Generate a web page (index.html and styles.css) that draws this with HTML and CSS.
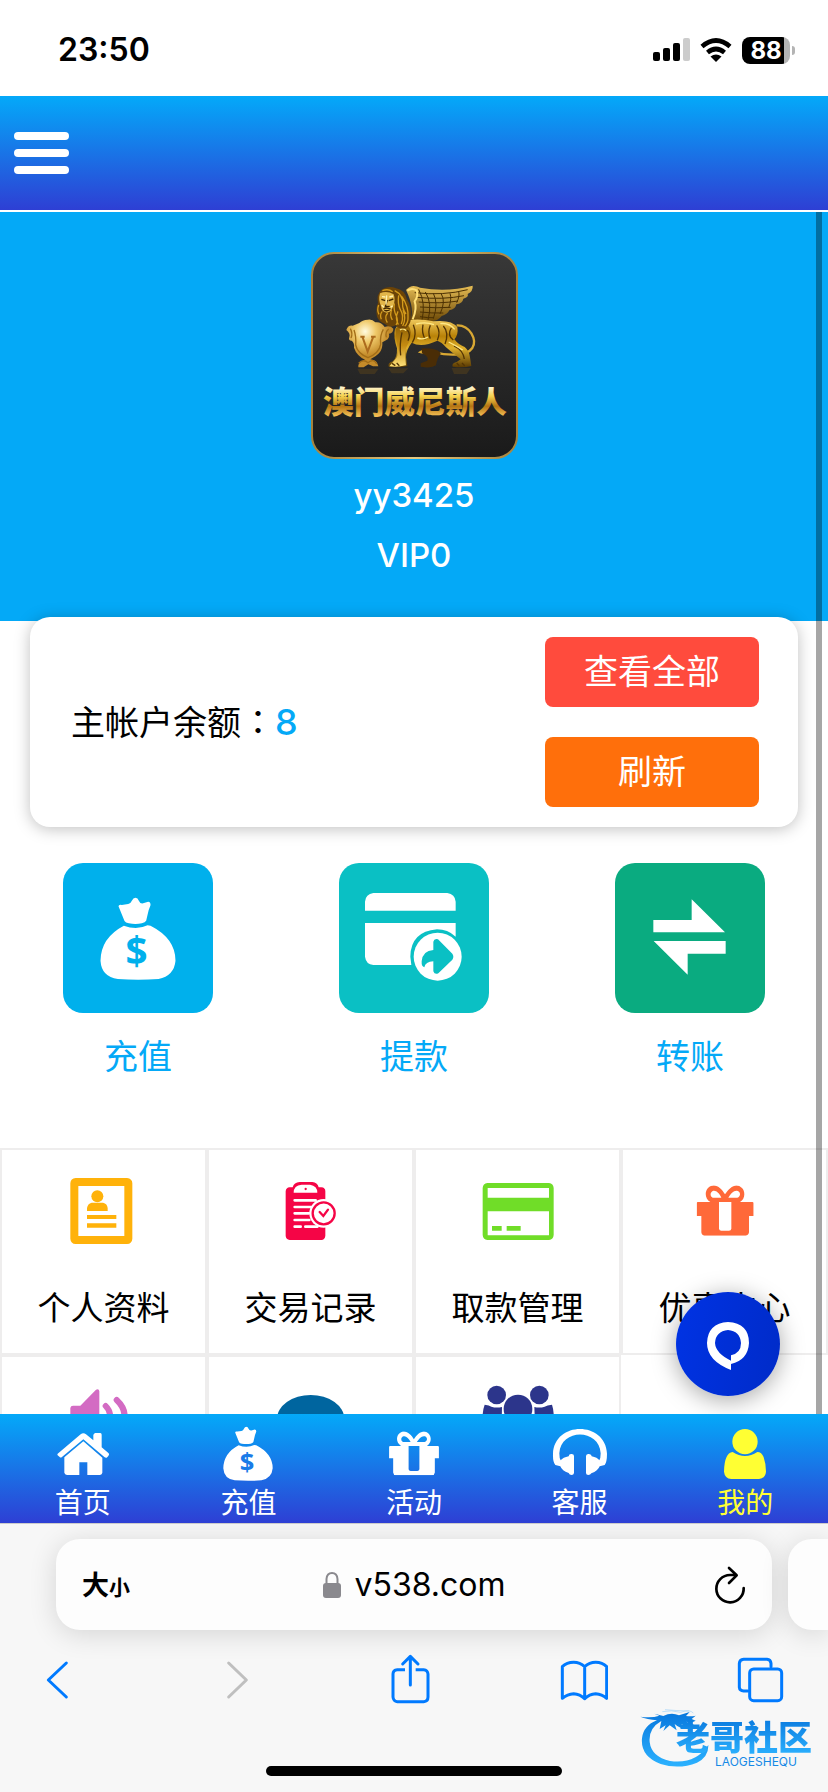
FILE: index.html
```html
<!DOCTYPE html>
<html lang="zh-CN">
<head>
<meta charset="utf-8">
<meta name="viewport" content="width=device-width, initial-scale=1">
<title>我的</title>
<link rel="stylesheet" href="styles.css">
</head>
<body>
<svg class="defs" aria-hidden="true">
  <symbol id="bag" viewBox="179 136 227 249">
    <path d="M234 164Q235 157 244 160L263 157Q271 155 274 147Q278 138 285 138Q292 138 295 147Q299 157 308 155L323 150Q331 151 330 161Q323 177 321 190L317 207Q314 212 304 215Q285 219 265 215Q255 213 252 208Z"/>
    <path d="M250 222Q288 237 321 221L330 222Q405 260 405 327Q401 372 354 382Q293 386 232 382Q183 375 180 327Q181 258 250 222Z"/>
    <text class="bag-sign" x="288" y="339" text-anchor="middle">$</text>
  </symbol>
  <symbol id="gift" viewBox="858 136 171 151">
    <path fill-rule="evenodd" d="M862 186H899C882 176 882 154 892 144C912 126 932 144 943 163C956 143 976 126 994 144C1005 156 1003 177 988 186H1025Q1029 186 1029 190V228H1015V277Q1014 286 1005 287H881Q873 286 872 277V228H858V190Q858 186 862 186ZM925 186V266Q926 272 932 272H955Q961 272 962 266V186ZM906 173H932C925 158 914 149 905 154C897 160 899 170 906 173ZM953 173H980C990 169 991 157 981 153C970 150 961 160 953 173Z"/>
  </symbol>
</svg>

<header class="status">
  <time class="clock">23:50</time>
  <div class="status-icons">
    <svg width="37" height="24" viewBox="0 0 37 24" aria-label="信号"><rect y="14" width="7" height="9" rx="2"/><rect x="10" y="10" width="7" height="13" rx="2"/><rect x="20" y="5" width="7" height="18" rx="2"/><rect x="30" width="7" height="23" rx="2" fill="#ccc"/></svg>
    <svg width="32" height="24" viewBox="0 0 32 24" aria-label="无线网络"><path d="M16 24L10.500 18.500Q16 14.500 21.500 18.500Z"/><path d="M7.500 14.500Q16 7.500 24.500 14.500M2 8.500Q16-3.500 30 8.500" fill="none" stroke="#000" stroke-width="4.600"/></svg>
    <span class="battery"><span class="battery-body">88</span><span class="battery-nub"></span></span>
  </div>
</header>

<nav class="topbar">
  <button class="menu" aria-label="菜单"><span></span><span></span><span></span></button>
</nav>

<main class="page">
  <section class="hero">
    <svg class="avatar" viewBox="33 36 621 621" role="img" aria-label="澳门威尼斯人">
      <defs>
        <linearGradient id="plate" x2="0" y2="1"><stop stop-color="#383838"/><stop offset="1" stop-color="#1a1a1a"/></linearGradient>
        <linearGradient id="rim"><stop stop-color="#a5823c"/><stop offset=".5" stop-color="#e3c983"/><stop offset="1" stop-color="#a5823c"/></linearGradient>
        <linearGradient id="gold" x2="0" y2="1"><stop stop-color="#f0c95c"/><stop offset=".35" stop-color="#b98208"/><stop offset=".6" stop-color="#dfb02c"/><stop offset="1" stop-color="#5a3a02"/></linearGradient>
        <linearGradient id="leg" x2="0" y2="1"><stop stop-color="#8a5d05"/><stop offset=".5" stop-color="#c48b12"/><stop offset="1" stop-color="#ffe27a"/></linearGradient>
        <linearGradient id="wing" x2="0" y2="1"><stop stop-color="#e6bd55"/><stop offset="1" stop-color="#6b4705"/></linearGradient>
        <radialGradient id="shield" cx=".4" cy=".25"><stop stop-color="#fffbe0"/><stop offset=".45" stop-color="#f0ca6a"/><stop offset="1" stop-color="#c48b2a"/></radialGradient>
        <linearGradient id="letter" gradientUnits="userSpaceOnUse" x1="0" y1="436" x2="0" y2="528"><stop stop-color="#fffbe8"/><stop offset=".35" stop-color="#f6d24e"/><stop offset=".68" stop-color="#b57412"/><stop offset="1" stop-color="#f3bf55"/></linearGradient>
      </defs>
      <rect x="36" y="39" width="615" height="615" rx="66" fill="url(#plate)" stroke="url(#rim)" stroke-width="6"/>
      <path d="M172 386H236L224 402H180ZM265 385H325L310 400H275ZM455 384H512L500 402H462Z" fill="#3f3420"/>
      <path d="M470 256C510 254 532 300 517 324C500 349 445 347 402 337Q377 326 362 336Q378 340 392 338" fill="none" stroke="#d9a833" stroke-width="7"/>
      <path d="M365 325Q420 325 422 342Q412 352 408 376Q394 386 362 380L362 370L382 362Q388 350 366 340Z" fill="#4a2d06"/>
      <path d="M318 150C332 134 345 136 360 143Q440 158 518 137Q520 153 503 162Q507 172 490 176Q488 190 469 193Q466 208 448 211Q442 224 425 228Q415 242 394 244L330 246Q346 208 318 150Z" fill="url(#wing)"/>
      <path d="M344 158Q430 168 503 149M350 172Q430 180 492 167M356 186Q420 192 474 183M360 201Q410 205 452 202M360 216Q396 220 430 219M360 230Q382 234 402 233M356 148Q378 190 366 240M376 156Q398 190 384 240M400 160Q416 190 400 236M424 162Q438 184 420 222M450 160Q456 176 446 204M476 155Q480 168 470 188" fill="none" stroke="#4c3103" stroke-width="3"/>
      <path d="M322 152Q335 142 350 151Q356 168 344 184Q352 205 338 238" fill="none" stroke="#ffe07a" stroke-width="6"/>
      <path d="M300 245Q350 232 400 244Q455 238 472 262Q476 284 463 298Q475 314 494 321Q508 333 510 352L514 378Q492 384 458 380Q454 370 470 366L482 358Q456 338 438 322Q425 306 412 302Q365 324 335 308Q318 330 318 352L322 378Q300 384 266 380Q262 370 278 364Q292 354 291 325Q279 290 285 268Z" fill="url(#gold)"/>
      <path d="M286 268Q298 250 322 253Q342 276 326 308Q312 330 316 354L318 376Q294 382 268 379L282 362Q297 352 292 322Z" fill="url(#leg)"/>
      <path d="M340 254Q352 284 337 308M369 254Q364 280 376 298M391 256Q382 278 391 296M410 256Q423 276 412 301M430 258Q448 278 435 312M454 264Q440 285 460 300M462 318Q489 330 493 357M306 277Q298 312 302 346M322 270Q333 282 324 302M276 370L286 377M290 369L298 377M470 369L478 377M486 369L494 377" fill="none" stroke="#543504" stroke-width="4"/>
      <path d="M348 252Q378 244 402 254M421 251Q448 248 464 268M300 270Q310 262 318 272M352 294Q370 300 384 291M446 306Q470 318 488 330" fill="none" stroke="#ffe988" stroke-width="4"/>
      <path d="M244 149Q266 136 288 145Q314 150 320 176Q335 198 332 225Q336 249 319 264Q298 270 287 256Q270 267 254 251Q238 246 231 230Q226 207 234 188Q229 164 244 149Z" fill="#6b4307"/>
      <path d="M284 152Q310 165 308 192Q306 205 318 222M296 166Q292 190 301 209Q313 228 304 252M306 170Q326 200 324 231Q325 248 314 259M283 190Q280 210 289 228Q296 243 288 255M275 209Q268 224 277 240M263 219Q252 232 262 248M247 214Q238 224 244 238M236 195Q230 210 237 223M294 214Q284 234 295 254M309 210Q320 235 308 258M247 152Q265 145 278 155" fill="none" stroke="#d39a1c" stroke-width="4"/>
      <path d="M240 160Q260 150 281 163Q287 180 280 197Q276 215 260 218Q245 217 243 198Q234 180 240 160Z" fill="#e2b649"/>
      <path d="M244 178L256 182M266 182L280 177M262 180L256 200L269 199M250 207Q259 202 272 207M253 211Q260 214 269 210" fill="none" stroke="#3e2602" stroke-width="4"/>
      <path d="M260 166L258 194M246 170L256 171M268 171L279 168M252 202L245 196M272 202L278 197" fill="none" stroke="#fff2b0" stroke-width="4"/>
      <path d="M139 270Q144 255 158 257L178 249Q187 240 203 239Q216 236 226 247Q244 245 254 261Q270 255 280 266Q280 279 267 281Q270 294 258 301L247 307Q249 327 237 340Q228 350 211 358Q232 360 235 379H219L205 373L191 382H175Q173 365 195 359Q170 347 162 323Q164 309 155 302Q144 302 148 291Q152 281 139 270Z" fill="url(#shield)"/>
      <path d="M162 270Q169 289 167 315Q172 340 204 353Q237 340 242 313Q239 287 250 268M176 370Q190 356 204 368Q222 354 230 372M151 266Q159 281 153 294M266 267Q255 275 259 292" fill="none" stroke="#a26d17" stroke-width="4"/>
      <path d="M187 290L203 335L220 290M181 290H194M213 290H227" fill="none" stroke="#ac6b1d" stroke-width="6"/>
      <text class="brand" x="345" y="519" text-anchor="middle">澳门威尼斯人</text>
    </svg>
    <p class="user-line">yy3425</p>
    <p class="user-line">VIP0</p>
  </section>

  <section class="balance">
    <p class="balance-text">主帐户余额<span lang="zh-TW" class="colon">：</span><strong>8</strong></p>
    <div class="balance-actions">
      <button class="btn btn-red">查看全部</button>
      <button class="btn btn-orange">刷新</button>
    </div>
  </section>

  <section class="quick">
    <a class="quick-item" href="#"><span class="tile tile-blue"><svg class="tile-bag"><use href="#bag"/></svg></span>充值</a>
    <a class="quick-item" href="#"><span class="tile tile-teal">
      <svg class="tile-art" viewBox="897 39 450 450"><path d="M975 182V155Q977 132 1000 129H1222Q1245 132 1247 155V182ZM975 219H1247V260Q1223 238 1191 238Q1112 245 1111 320L1114 345H1000Q978 343 975 320Z"/><circle cx="1193" cy="320" r="72"/><path fill="#0ac0c4" d="M1180 275Q1182 265 1194 268L1237 311Q1243 320 1237 329L1195 370Q1184 375 1180 364V334Q1156 335 1153 352Q1144 350 1145 334Q1148 302 1180 300Z"/></svg></span>提款</a>
    <a class="quick-item" href="#"><span class="tile tile-green">
      <svg class="tile-art" viewBox="465 39 450 450"><path d="M580 210H695V148L795 247H580ZM581 273H797V311H683V374Z"/></svg></span>转账</a>
  </section>

  <section class="grid">
    <a class="cell" href="#">
      <svg viewBox="203 105 216 216" fill="#ffb20a"><path fill-rule="evenodd" d="M226 114H380Q396 116 396 130V296Q395 311 380 312H226Q211 311 210 296V130Q211 115 226 114ZM234 138V288H372V138Z"/><circle cx="291" cy="169" r="18"/><path d="M260 213V204Q262 191 274 188H308Q321 191 322 204V213ZM260 225H348V237H260ZM260 250H348V263H260Z"/></svg>个人资料</a>
    <a class="cell" href="#">
      <svg viewBox="823 105 216 216" fill="#f50546"><path d="M876 142Q880 127 897 126H935Q950 127 954 142H962Q974 143 974 154V287Q973 299 962 300H867Q856 299 855 288V154Q856 143 867 142Z"/><path fill="#fff" d="M879 158Q879 136 903 134H928Q950 137 950 158Z"/><circle cx="915" cy="147" r="3.500"/><path d="M882 181H945M882 201H932M882 220H925M882 240H926M882 260H900M914 260H950" stroke="#fff" stroke-width="8" stroke-linecap="round"/><circle cx="969" cy="220" r="43" fill="#fff"/><circle cx="969" cy="220" r="33" fill="#fff" stroke="#f50546" stroke-width="7"/><path d="M957 216L968 228L982 209" fill="none" stroke="#f50546" stroke-width="7" stroke-linecap="round"/></svg>交易记录</a>
    <a class="cell" href="#">
      <svg viewBox="214 105 216 216" fill="#70dd28"><path fill-rule="evenodd" d="M230 129H415Q428 131 429 144V285Q428 298 415 300H230Q217 298 216 285V144Q217 131 230 129ZM231 144V173H415V144ZM231 214V286H415V214Z"/><path d="M244 258H273V272H244ZM288 258H330V272H288Z"/></svg>取款管理</a>
    <a class="cell" href="#">
      <svg viewBox="835 105 216 216" fill="#ff6939"><use href="#gift" x="858" y="136" width="171" height="151"/></svg>优惠中心</a>
    <a class="cell" href="#" aria-label="公告">
      <svg viewBox="203 726 216 216" fill="#d36bc3"><path d="M210 804Q211 797 218 797H240L287 749Q296 745 297 754V900L287 895L240 850H218Q211 850 210 843Z"/><path d="M316 798Q342 824 316 862M349 780Q396 824 349 880" fill="none" stroke="#d36bc3" stroke-width="18" stroke-linecap="round"/></svg></a>
    <a class="cell" href="#" aria-label="消息">
      <svg viewBox="823 726 216 216" fill="#00659f"><ellipse cx="930" cy="837" rx="101" ry="72"/></svg></a>
    <a class="cell" href="#" aria-label="团队">
      <svg viewBox="214 726 216 216" fill="#2c358b"><circle cx="258" cy="765" r="28"/><circle cx="386" cy="765" r="28"/><path d="M222 794Q236 796 242 800Q257 805 274 801L273 850H216Q214 814 222 794ZM371 801Q387 805 402 800Q409 796 424 794Q431 814 429 850H373Z"/><circle cx="322" cy="807" r="43"/></svg></a>
  </section>
  <span class="scrollbar"></span>
  <button class="fab" aria-label="在线客服"><svg viewBox="798 456 312 312"><path fill="#fff" fill-rule="evenodd" d="M954 546Q1017 550 1017 609Q1014 660 963 672V690Q891 662 891 609Q893 550 954 546ZM954 570Q917 574 915 609Q917 640 963 662V646Q993 639 993 609Q990 573 954 570Z"/></svg></button>
</main>

<nav class="tabs">
  <a class="tab" href="#"><svg viewBox="161 75 168 168"><path d="M169 161L238 103Q246 96 254 103L276 121V105Q277 100 282 99H297Q301 100 301 104V142L322 160Q325 164 321 168L316 173Q312 174 309 171L246 118L181 172Q178 174 175 171L169 166Q167 164 169 161Z"/><path d="M246 124L303 173V218Q302 224 296 225H258V187H234V225H197Q190 224 189 218V172Z"/></svg>首页</a>
  <a class="tab" href="#"><svg viewBox="660 75 168 168"><use href="#bag" x="669" y="79" width="150" height="164"/></svg>充值</a>
  <a class="tab" href="#"><svg viewBox="1158 75 168 168"><use href="#gift" x="1167" y="94" width="150" height="132"/></svg>活动</a>
  <a class="tab" href="#"><svg viewBox="423 75 168 168"><path d="M433 195Q425 186 426 161C430 62 584 62 588 161Q588 186 581 195L566 199Q561 213 541 220Q538 225 532 225Q525 225 525 219V168Q526 161 534 162Q542 163 542 169Q559 172 565 181Q569 175 569 160C565 85 449 85 445 160Q445 175 449 181Q456 172 473 169Q474 161 482 162Q489 162 489 168V219Q488 225 482 225Q475 225 473 219Q453 213 448 199Z"/></svg>客服</a>
  <a class="tab tab-active" href="#"><svg viewBox="920 75 168 168"><circle cx="1004" cy="125" r="38"/><path d="M967 156Q1004 180 1041 156Q1054 156 1060 172Q1067 192 1067 215Q1065 235 1046 237H963Q943 235 941 215Q942 159 967 156Z"/></svg>我的</a>
</nav>

<footer class="browser">
  <div class="address-row">
    <div class="address">
      <button class="text-size" aria-label="文字大小">大<small>小</small></button>
      <button class="url"><svg width="18" height="26" viewBox="0 0 18 26"><rect y="11" width="18" height="15" rx="3" fill="#8a898e"/><path d="M3.500 12V7Q4 1 9 1Q14 1 14.500 7V12" fill="none" stroke="#8a898e" stroke-width="2"/></svg>v538.com</button>
      <button class="reload" aria-label="重新加载"><svg width="32" height="38" viewBox="905 132 96 114" fill="none" stroke="#000" stroke-width="8" stroke-linecap="round" stroke-linejoin="round"><path d="M994 198A41 41 0 1 1 953 159H972M950 138L973 160L950 183"/></svg></button>
    </div>
    <div class="next-page"></div>
  </div>
  <div class="toolbar">
    <button aria-label="后退"><svg viewBox="99 396 144 168"><path d="M199 429L145 480L199 531"/></svg></button>
    <button aria-label="前进" class="disabled" disabled><svg viewBox="626 396 144 168"><path d="M685 429L738 480L685 531"/></svg></button>
    <button aria-label="分享"><svg viewBox="1153 396 144 168"><path stroke-linecap="butt" d="M1213 449H1190Q1177 450 1177 462V531Q1178 544 1190 545H1269Q1282 544 1282 531V462Q1281 450 1269 449H1245"/><path d="M1229 495V409M1206 432L1229 409L1252 432"/></svg></button>
    <button aria-label="书签"><svg viewBox="450 396 144 168"><path d="M524 440V536M524 440Q510 427 491 427Q470 427 457 440V535Q472 522 491 521Q510 522 524 536Q538 522 557 521Q576 522 590 535V440Q577 427 557 427Q538 427 524 440"/></svg></button>
    <button aria-label="标签页"><svg viewBox="978 396 144 168"><rect x="1019" y="447" width="96" height="95" rx="12"/><path d="M1083 440V430Q1082 419 1071 418H1001Q989 419 988 430V502Q989 512 1001 513H1013"/></svg></button>
  </div>
  <span class="home-bar"></span>
  <div class="watermark">
    <svg class="dragon" viewBox="690 565 210 180"><defs><linearGradient id="sea" x2="0" y2="1"><stop stop-color="#0877dd"/><stop offset="1" stop-color="#2cb2ff"/></linearGradient></defs>
      <path fill="url(#sea)" d="M754 604Q715 626 719 667Q724 711 780 724Q856 735 895 676Q896 711 861 729Q807 750 752 733Q691 710 696 656Q700 618 741 602Q711 599 691 591Q725 596 748 588L733 582L760 589Q784 577 807 587L839 577L828 589Q844 591 857 588L845 598L857 603Q844 612 828 606L855 617Q835 625 811 612L835 628Q811 629 794 613L800 632L779 617L760 634L767 617L749 628Z"/>
      <path d="M757 576Q784 570 812 578Q839 568 850 580M765 570Q795 573 838 574" fill="none" stroke="#a5d3f7" stroke-width="2"/></svg>
    <p class="mark-name">老哥社区</p>
    <p class="mark-latin">LAOGESHEQU</p>
  </div>
</footer>
</body>
</html>
```

FILE: styles.css
```css
* { box-sizing: border-box; }

body {
  margin: 0;
  height: 100vh;
  display: flex;
  flex-direction: column;
  overflow: hidden;
  background: #fff;
  color: #000;
  font-family: Inter, "Noto Sans CJK SC", sans-serif;
  font-size: 34px;
  line-height: 48px;
}

p { margin: 0; }
a { color: inherit; text-decoration: none; }
svg { display: block; }
button {
  padding: 0;
  border: 0;
  background: none;
  color: inherit;
  font: inherit;
}
.defs { position: absolute; width: 0; height: 0; }
.bag-sign {
  font: 700 116px "Noto Sans", sans-serif;
  fill: var(--sign);
}

/* status bar */
.status {
  flex: none;
  height: 96px;
  padding: 4px 33px 0 58px;
  display: flex;
  align-items: center;
  justify-content: space-between;
}
.clock { font-size: 32px; font-weight: 600; }
.status-icons { display: flex; align-items: center; gap: 10px; }
.battery { display: flex; align-items: center; gap: 2px; }
.battery-body {
  width: 48px;
  border-radius: 8px;
  background: linear-gradient(90deg, #000 88%, #b4b4b4 88%);
  color: #fff;
  font-size: 24px;
  font-weight: 700;
  line-height: 27px;
  text-align: center;
}
.battery-nub {
  width: 3px;
  height: 9px;
  border-radius: 0 4px 4px 0;
  background: #b4b4b4;
}

/* top bar */
.topbar {
  flex: none;
  height: 116px;
  padding-left: 14px;
  display: flex;
  align-items: center;
  border-bottom: 2px solid #fff;
  background: linear-gradient(#04a9f9, #2e3fd4) padding-box;
}
.menu { display: flex; flex-direction: column; gap: 9px; }
.menu span { width: 55px; height: 8px; border-radius: 4px; background: #fff; }

/* page */
.page {
  flex: 1;
  min-height: 0;
  position: relative;
  overflow: hidden;
}
.hero {
  padding: 40px 0 36px;
  background: #04a9f7;
  color: #fff;
  text-align: center;
}
.avatar { width: 207px; height: 207px; margin: 0 auto 6px; }
.brand {
  font: 900 92px "Noto Sans CJK SC", sans-serif;
  fill: url(#letter);
}
.user-line { font-size: 33px; line-height: 60px; font-weight: 500; }

.balance {
  position: relative;
  margin: -4px 30px 0;
  padding: 20px 39px 20px 41px;
  display: flex;
  align-items: center;
  justify-content: space-between;
  border-radius: 20px;
  background: #fff;
  box-shadow: 0 2px 16px rgba(0, 0, 0, .25);
}
.colon { font-family: "Noto Sans CJK TC", sans-serif; }
.balance strong { color: #04a9f7; font-size: 36px; font-weight: 500; }
.balance-actions { width: 214px; display: grid; gap: 30px; }
.btn {
  height: 70px;
  border-radius: 8px;
  color: #fff;
}
.btn-red { background: #ff4b3d; }
.btn-orange { background: #ff6f0b; }

.quick {
  padding: 36px 0 67px;
  display: grid;
  grid-template-columns: repeat(3, 1fr);
}
.quick-item {
  display: flex;
  flex-direction: column;
  align-items: center;
  gap: 20px;
  color: #04a9f7;
}
.tile {
  width: 150px;
  height: 150px;
  display: grid;
  place-items: center;
  border-radius: 20px;
  fill: #fff;
}
.tile-blue { --sign: #00b0ec; background: #00b0ec; }
.tile-teal { background: #0ac0c4; }
.tile-green { background: #0aab80; }
.tile-bag { width: 76px; height: 83px; }
.tile-art { width: 150px; height: 150px; }

.grid {
  display: grid;
  grid-template-columns: repeat(4, 1fr);
}
.cell {
  aspect-ratio: 1;
  padding-top: 25px;
  display: flex;
  flex-direction: column;
  align-items: center;
  gap: 37px;
  border: 2px solid #eeeded;
  font-size: 33px;
}
.cell > svg { flex: none; width: 72px; height: 72px; }

.scrollbar {
  position: absolute;
  inset: 0 6px 0 auto;
  width: 6px;
  background: rgba(0, 0, 0, .35);
}
.fab {
  position: absolute;
  right: 48px;
  bottom: 18px;
  width: 104px;
  height: 104px;
  border-radius: 50%;
  background: linear-gradient(100deg, #0033e4, #002bc8);
  box-shadow: 0 4px 24px rgba(0, 0, 0, .35);
}

/* site tabs */
.tabs {
  flex: none;
  height: 109px;
  display: grid;
  grid-template-columns: repeat(5, 1fr);
  background: linear-gradient(#04a9f9, #2e3fd4);
  color: #fff;
  fill: #fff;
  --sign: #1a7be8;
}
.tab {
  padding-top: 11px;
  display: flex;
  flex-direction: column;
  align-items: center;
  font-size: 28px;
  line-height: 44px;
}
.tab svg { width: 56px; height: 56px; }
.tab-active { color: #ff3; fill: #ff3; }

/* browser controls */
.browser {
  flex: none;
  position: relative;
  border-top: 1px solid #ccc;
  background: #f7f7f7;
  overflow: hidden;
}
.address-row {
  padding: 15px 0 0 56px;
  display: flex;
  gap: 16px;
}
.address, .next-page {
  height: 91px;
  background: #fdfdfd;
  box-shadow: 0 4px 28px rgba(0, 0, 0, .14);
}
.address {
  flex: 1;
  padding: 0 26px;
  display: grid;
  grid-template-columns: 1fr auto 1fr;
  align-items: center;
  border-radius: 24px;
}
.next-page { width: 40px; border-radius: 24px 0 0 24px; }
.text-size {
  justify-self: start;
  padding-top: 4px;
  font-size: 27px;
  font-weight: 700;
}
.text-size small { font-size: 21px; }
.url { display: flex; align-items: center; gap: 14px; font-size: 32px; }
.reload { justify-self: end; }
.toolbar {
  padding: 22px 44px 0 33px;
  display: flex;
  justify-content: space-between;
}
.toolbar svg {
  width: 48px;
  height: 56px;
  fill: none;
  stroke: #007aff;
  stroke-width: 9;
  stroke-linecap: round;
  stroke-linejoin: round;
}
.toolbar .disabled svg { stroke: #bfbfbf; }
.home-bar {
  display: block;
  width: 296px;
  height: 10px;
  margin: 58px auto 16px;
  border-radius: 5px;
  background: #000;
}
.watermark {
  position: absolute;
  right: 16px;
  bottom: 24px;
  padding-left: 36px;
  color: #1689e6;
}
.dragon { position: absolute; left: 0; bottom: 0; width: 70px; height: 60px; }
.mark-name {
  position: relative;
  font-size: 34px;
  font-weight: 900;
  line-height: 36px;
  background: linear-gradient(#0c7de0, #2cb2ff);
  background-clip: text;
  color: transparent;
}
.mark-latin {
  position: relative;
  padding-left: 24px;
  font-size: 12px;
  line-height: 12px;
  text-align: center;
  white-space: nowrap;
}
```
